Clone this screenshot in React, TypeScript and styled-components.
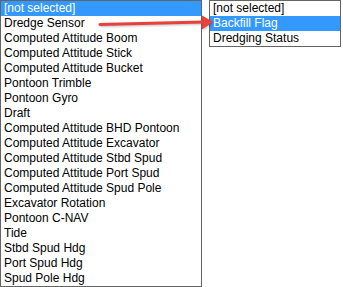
import React from "react";
import styled, { createGlobalStyle } from "styled-components";

const sensors = [
  "[not selected]",
  "Dredge Sensor",
  "Computed Attitude Boom",
  "Computed Attitude Stick",
  "Computed Attitude Bucket",
  "Pontoon Trimble",
  "Pontoon Gyro",
  "Draft",
  "Computed Attitude BHD Pontoon",
  "Computed Attitude Excavator",
  "Computed Attitude Stbd Spud",
  "Computed Attitude Port Spud",
  "Computed Attitude Spud Pole",
  "Excavator Rotation",
  "Pontoon C-NAV",
  "Tide",
  "Stbd Spud Hdg",
  "Port Spud Hdg",
  "Spud Pole Hdg",
];

const flags = ["[not selected]", "Backfill Flag", "Dredging Status"];

const Global = createGlobalStyle`
  body {
    margin: 0;
    background: #fff;
    font-family: "Liberation Sans", Arial, sans-serif;
  }
`;

const Page = styled.div`
  position: relative;
  display: flex;
  align-items: flex-start;
  gap: 7px;
  width: 343px;
  height: 287px;
  overflow: hidden;
`;

const ListBox = styled.ul<{ $width: number }>`
  list-style: none;
  margin: 0;
  padding: 0;
  box-sizing: border-box;
  width: ${(p) => p.$width}px;
  border: 1px solid #646464;
  background: #fff;
`;

const Option = styled.li<{ $selected?: boolean }>`
  height: 15px;
  line-height: 15px;
  padding-left: 3px;
  font-size: 12px;
  white-space: nowrap;
  overflow: hidden;
  color: ${(p) => (p.$selected ? "#fff" : "#000")};
  background: ${(p) => (p.$selected ? "#3399ff" : "transparent")};
`;

const Arrow = styled.svg`
  position: absolute;
  left: 0;
  top: 0;
  overflow: visible;
  filter: drop-shadow(1px 1px 1px rgba(0, 0, 0, 0.25));
`;

export default function App() {
  return (
    <>
      <Global />
      <Page>
        <ListBox $width={202}>
          {sensors.map((s, i) => (
            <Option key={s} $selected={i === 0}>
              {s}
            </Option>
          ))}
        </ListBox>
        <ListBox $width={132}>
          {flags.map((f, i) => (
            <Option key={f} $selected={i === 1}>
              {f}
            </Option>
          ))}
        </ListBox>
        <Arrow width="343" height="40">
          <line x1="100" y1="24.5" x2="204" y2="22" stroke="#e8413c" strokeWidth="3" strokeLinecap="round" />
          <polygon points="202,15.5 213,22 202,29.5" fill="#e8413c" />
        </Arrow>
      </Page>
    </>
  );
}
